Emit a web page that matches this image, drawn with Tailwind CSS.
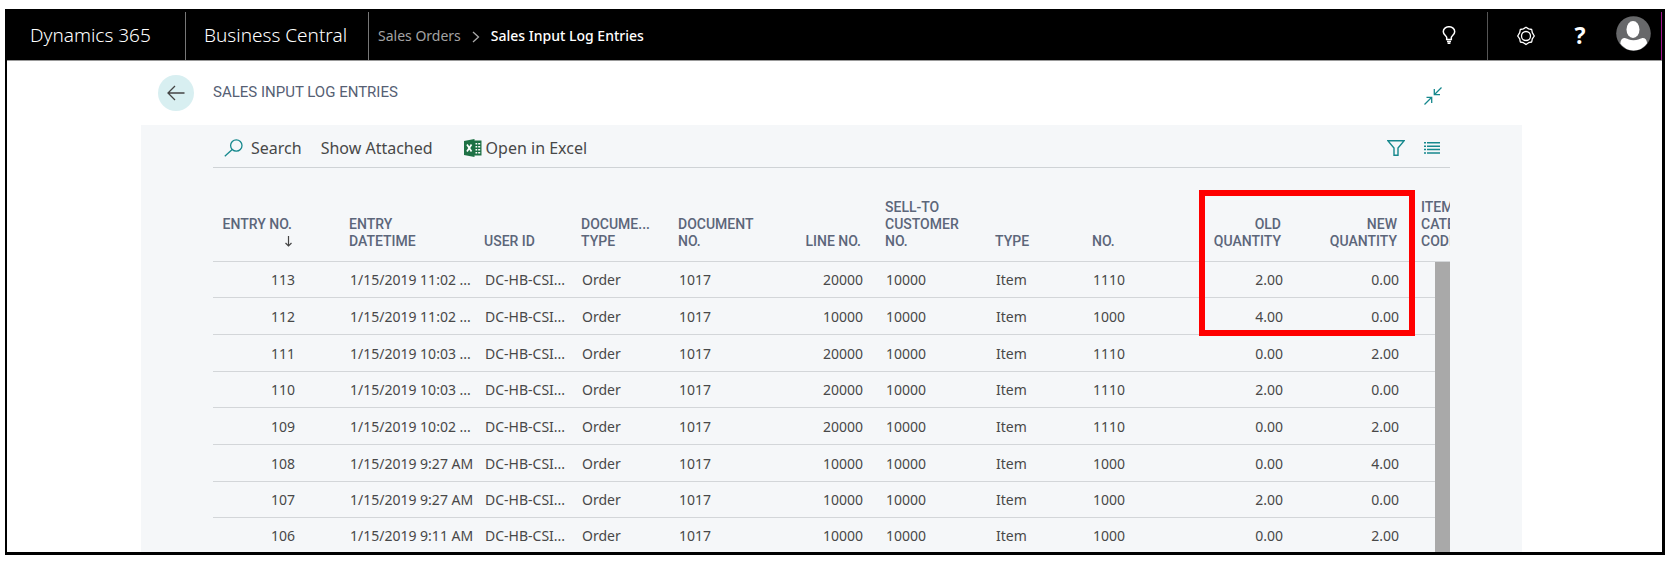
<!DOCTYPE html>
<html lang="en">
<head>
<meta charset="utf-8">
<title>Sales Input Log Entries</title>
<script src="https://cdn.jsdelivr.net/npm/@tailwindcss/browser@4"></script>
</head>
<body class="bg-white font-['Noto_Sans',sans-serif] pt-[9px] pl-[5px] pr-[6px] pb-[7px]">
<div class="border-black border-l-2 border-r-3 border-b-3">
  <header class="flex h-[51px] items-stretch bg-black pt-[3px] text-white">
    <a href="#" class="flex w-[179px] items-center border-r border-[#777] pl-[23px] pb-[2px] text-[19px] font-light">Dynamics 365</a>
    <a href="#" class="flex w-[183px] items-center border-r border-[#777] pl-[18px] pb-[2px] text-[19px] font-light">Business Central</a>
    <nav aria-label="Breadcrumb" class="flex items-center pl-[9px] pb-[2px] text-[14px]">
      <a href="#" class="text-[#a3a3a3]">Sales Orders</a>
      <svg class="mx-[11px] mt-[3px] h-[12px] w-[8px]" viewBox="0 0 8 12" fill="none" stroke="#aaa" stroke-width="1.300"><path d="M1 1l5.500 5L1 11"/></svg>
      <span class="font-medium">Sales Input Log Entries</span>
    </nav>
    <div class="ml-auto flex items-stretch border-r border-[#a0188c]">
      <button aria-label="Tell me" class="flex w-[78px] items-center justify-center border-r border-[#555] pb-[2px]">
        <svg class="h-[18px] w-[14px]" viewBox="0 0 14 18" fill="none" stroke="#fff" stroke-width="1.500"><path d="M4.700 13.500v-2C4.700 9.800 1.300 8.800 1.300 5.700a5.700 5 0 0 1 11.400 0c0 3.100-3.400 4.100-3.400 5.800v2zM5 15.500h4M5.600 17.300h2.800"/></svg>
      </button>
      <button aria-label="Settings" class="flex w-[75px] items-center justify-center">
        <svg class="h-[20px] w-[20px]" viewBox="0 0 20 20" fill="none" stroke="#fff" stroke-width="1.300"><circle cx="10" cy="10" r="4.500"/><path d="M10 1.200l2.600 1.700 3.100.6.600 3.100L18.300 10l-2 2.900-.6 3.100-3.100.7-2.600 1.900-2.600-1.900-3.100-.7-.6-3.100-2-2.900 2-3.400.6-3.100 3.100-.6z" stroke-linejoin="round"/></svg>
      </button>
      <button class="flex w-[34px] items-center justify-center pb-[2px] text-[23px] font-bold" aria-label="Help">?</button>
      <button aria-label="Account" class="flex w-[64px] items-start justify-end pt-[4px] pr-[10px]">
        <svg class="h-[35px] w-[35px]" viewBox="0 0 35 35"><circle cx="17.500" cy="17.500" r="17.300" fill="#67686a"/><ellipse cx="17" cy="13.500" rx="6.500" ry="8.500" fill="#fff"/><path d="M4.300 27.500c.3-4 2.500-5.800 5.200-5.300 2.500.5 4 2 8 2s6-1.500 8.300-2c3-.5 5 1.500 5.300 5A17 17 0 0 1 17.500 34.500 17 17 0 0 1 4.300 27.500z" fill="#fff"/></svg>
      </button>
    </div>
  </header>

  <main class="border-t border-[#999]">
    <div class="mr-[212px] ml-[151px] flex h-[64px] items-center">
      <button aria-label="Back" class="flex h-[36px] w-[36px] items-center justify-center rounded-full bg-[#d8eff1]">
        <svg class="h-[16px] w-[18px]" viewBox="0 0 18 16" fill="none" stroke="#444" stroke-width="1.300"><path d="M17.500 8H1M8 1L1 8l7 7"/></svg>
      </button>
      <h1 class="ml-[19px] pb-[2px] font-[Roboto,sans-serif] text-[15px] text-[#566074]">SALES INPUT LOG ENTRIES</h1>
      <button aria-label="Collapse" class="mt-[5px] mr-[8px] ml-auto">
        <svg class="block h-[18px] w-[18px]" viewBox="0 0 18 18" fill="none" stroke="#16888d" stroke-width="1.300"><path d="M17.500.5l-7 7M10.300 2v5.700H16M.5 17.500l7-7M2.500 10.300h5.200V16"/></svg>
      </button>
    </div>

    <section class="mr-[140px] ml-[134px] bg-[#f5f7f9] pr-[72px] pl-[72px]">
      <div class="flex h-[43px] items-center border-b border-[#cfd3d6] pt-[3px] pr-[10px] pl-[11px] text-[16px] text-[#484848]">
        <button class="flex items-center gap-[8px]">
          <svg class="h-[18px] w-[19px]" viewBox="0 0 19 18" fill="none" stroke="#16888d" stroke-width="1.300"><circle cx="12.300" cy="6.500" r="5.700"/><path d="M8.200 10.500L.8 17.300"/></svg>
          Search</button>
        <button class="ml-[19px]">Show Attached</button>
        <button class="ml-[31px] flex items-center gap-[4px]">
          <svg class="h-[18px] w-[18px]" viewBox="0 0 18 18"><path d="M10 1.500h7.500v15H10z" fill="#1e7145"/><path d="M11.500 4h1.700v1.500h-1.700zM14.200 4h2v1.500h-2zM11.500 7h1.700v1.500h-1.700zM14.200 7h2v1.500h-2zM11.500 10h1.700v1.500h-1.700zM14.200 10h2v1.500h-2zM11.500 13h1.700v1.500h-1.700zM14.200 13h2v1.500h-2z" fill="#fff"/><path d="M0 2l10.500-2v18L0 16z" fill="#1e7145"/><path d="M3 5.500l4.500 7M7.500 5.500l-4.500 7" stroke="#fff" stroke-width="1.700"/></svg>
          Open in Excel</button>
        <button aria-label="Filter" class="ml-auto">
          <svg class="block h-[16px] w-[18px]" viewBox="0 0 18 16" fill="none" stroke="#16888d" stroke-width="1.400"><path d="M.8.700h16.400L11 8v7.300H7V8z"/></svg>
        </button>
        <button aria-label="List view" class="ml-[19px]">
          <svg class="block h-[12px] w-[16px]" viewBox="0 0 16 12" fill="none" stroke="#16888d"><path d="M0 .8h2M3 .8h13M0 4.200h2M3 4.200h13M0 7.600h2M3 7.600h13M0 11h2M3 11h13" stroke-width="1.500"/></svg>
        </button>
      </div>

      <div class="relative overflow-hidden">
        <table class="w-full table-fixed border-separate border-spacing-0 text-[14px] text-[#484848]">
          <colgroup>
            <col class="w-[130px]"><col class="w-[135px]"><col class="w-[97px]"><col class="w-[97px]"><col class="w-[105px]"><col class="w-[102px]"><col class="w-[110px]"><col class="w-[97px]"><col class="w-[97px]"><col class="w-[116px]"><col class="w-[116px]"><col>
          </colgroup>
          <thead class="font-[Roboto,sans-serif] text-[14px] leading-[17px] text-[#5c667a] [&_th]:h-[94px] [&_th]:border-b [&_th]:border-[#d3d6d9] [&_th]:p-0 [&_th]:pb-[11px] [&_th]:pl-[6px] [&_th]:align-bottom [&_th]:font-medium [&_th]:whitespace-nowrap">
            <tr class="text-left">
              <th><div class="pr-[51px] text-right">ENTRY NO.<svg class="mt-[2px] mb-[2px] ml-auto h-[13px] w-[7px]" viewBox="0 0 7 13" fill="none" stroke="#444" stroke-width="1.200"><path d="M3.500 1v10M.5 8l3 3 3-3"/></svg></div></th>
              <th>ENTRY<br>DATETIME</th>
              <th>USER ID</th>
              <th>DOCUME...<br>TYPE</th>
              <th>DOCUMENT<br>NO.</th>
              <th><div class="pr-[18px] text-right">LINE NO.</div></th>
              <th>SELL-TO<br>CUSTOMER<br>NO.</th>
              <th>TYPE</th>
              <th>NO.</th>
              <th><div class="pr-[18px] text-right">OLD<br>QUANTITY</div></th>
              <th><div class="pr-[18px] text-right">NEW<br>QUANTITY</div></th>
              <th><div class="overflow-hidden">ITEM<br>CATEGORY<br>CODE</div></th>
            </tr>
          </thead>
          <tbody id="rows" class="[&_td]:border-b [&_td]:border-[#d3d6d9] [&_td]:p-0 [&_td]:pl-[7px] [&_td]:whitespace-nowrap [&_tr]:h-[37px] [&_tr:nth-child(3n+1)]:h-[36px] [&_tr:last-child]:h-[34px] [&_tr:last-child_td]:border-b-0"></tbody>
        </table>
        <div class="absolute top-[94px] right-0 bottom-0 w-[15px] bg-[#a9a9a9]"></div>
        <div class="absolute top-[22px] right-[35px] h-[146px] w-[216px] border-6 border-[#ff0000]"></div>
      </div>
    </section>
  </main>
</div>
<script>
const entries = [
  ["113", "1/15/2019 11:02 ...", "20000", "1110", "2.00", "0.00"],
  ["112", "1/15/2019 11:02 ...", "10000", "1000", "4.00", "0.00"],
  ["111", "1/15/2019 10:03 ...", "20000", "1110", "0.00", "2.00"],
  ["110", "1/15/2019 10:03 ...", "20000", "1110", "2.00", "0.00"],
  ["109", "1/15/2019 10:02 ...", "20000", "1110", "0.00", "2.00"],
  ["108", "1/15/2019 9:27 AM", "10000", "1000", "0.00", "4.00"],
  ["107", "1/15/2019 9:27 AM", "10000", "1000", "2.00", "0.00"],
  ["106", "1/15/2019 9:11 AM", "10000", "1000", "0.00", "2.00"]
];
document.getElementById("rows").innerHTML = entries.map(([id, date, line, no, oldQty, newQty]) => `
  <tr>
    <td><div class="pr-[48px] text-right">${id}</div></td>
    <td>${date}</td>
    <td>DC-HB-CSI...</td>
    <td>Order</td>
    <td>1017</td>
    <td><div class="pr-[16px] text-right">${line}</div></td>
    <td>10000</td>
    <td>Item</td>
    <td>${no}</td>
    <td><div class="pr-[16px] text-right">${oldQty}</div></td>
    <td><div class="pr-[16px] text-right">${newQty}</div></td>
    <td></td>
  </tr>`).join("");
</script>
</body>
</html>
